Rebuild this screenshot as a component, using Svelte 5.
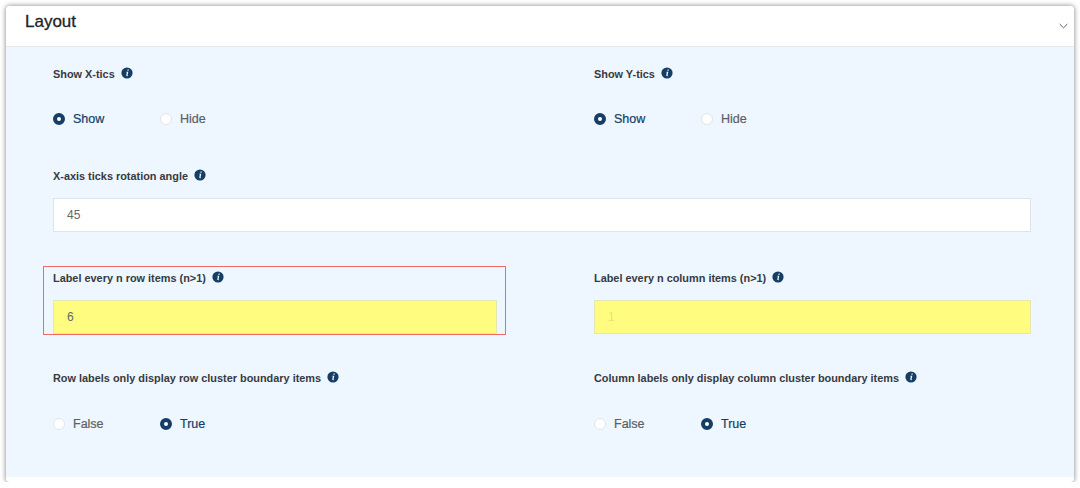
<script lang="ts">
  interface Radio {
    label: string;
    options: string[];
    selected: string;
  }

  const xTics: Radio = { label: "Show X-tics", options: ["Show", "Hide"], selected: "Show" };
  const yTics: Radio = { label: "Show Y-tics", options: ["Show", "Hide"], selected: "Show" };
  const rowBoundary: Radio = {
    label: "Row labels only display row cluster boundary items",
    options: ["False", "True"],
    selected: "True",
  };
  const colBoundary: Radio = {
    label: "Column labels only display column cluster boundary items",
    options: ["False", "True"],
    selected: "True",
  };
</script>

{#snippet info()}
  <svg class="info" viewBox="0 0 12 12">
    <circle cx="6" cy="6" r="5.6" fill="#153e64" />
    <path d="M6.6 2.5h1.2l-.25 1.2H6.35zM6.1 4.7h1.2l-.8 3.5q-.05.35.5.3l-.1.6q-1.7.3-1.6-.8l.55-2.9h-.5l.1-.6z" fill="#fff" />
  </svg>
{/snippet}

{#snippet label(text: string)}
  <div class="label">{text}{@render info()}</div>
{/snippet}

{#snippet radios(group: Radio)}
  <div class="field">
    {@render label(group.label)}
    <div class="options">
      {#each group.options as option}
        <div class="option" class:checked={option === group.selected}>
          <span class="dot"></span>
          <span>{option}</span>
        </div>
      {/each}
    </div>
  </div>
{/snippet}

<div class="card">
  <div class="header">
    <h2>Layout</h2>
    <svg class="chevron" viewBox="0 0 10 6" fill="none" stroke="#555" stroke-width="1">
      <path d="M.7.8 5 5 9.3.8" />
    </svg>
  </div>
  <div class="body">
    <div class="pair first">
      {@render radios(xTics)}
      {@render radios(yTics)}
    </div>

    <div class="wide">
      {@render label("X-axis ticks rotation angle")}
      <div class="input">45</div>
    </div>

    <div class="pair inputs">
      <div class="field">
        {@render label("Label every n row items (n>1)")}
        <div class="input yellow">6</div>
        <div class="highlight"></div>
      </div>
      <div class="field">
        {@render label("Label every n column items (n>1)")}
        <div class="input yellow disabled">1</div>
      </div>
    </div>

    <div class="pair last">
      {@render radios(rowBoundary)}
      {@render radios(colBoundary)}
    </div>
  </div>
</div>

<style>
  :global(body) {
    margin: 0;
    background: #fff;
  }

  .card {
    box-sizing: border-box;
    width: 1068px;
    height: 476px;
    margin: 6px 0 0 6px;
    padding-bottom: 5px;
    display: flex;
    flex-direction: column;
    background: #fff;
    border-radius: 4px;
    box-shadow: 0 0 4px 1px rgba(0, 0, 0, 0.36);
    font-family: "Liberation Sans", Arial, sans-serif;
  }

  .header {
    box-sizing: border-box;
    height: 41px;
    flex: none;
    padding: 0 6px 0 19px;
    display: flex;
    justify-content: space-between;
    background: #fff;
    border-bottom: 1px solid #e6eaee;
    border-radius: 4px 4px 0 0;
  }

  h2 {
    margin: 6px 0 0;
    font-size: 17px;
    line-height: 20px;
    font-weight: 400;
    color: #1f2328;
    -webkit-text-stroke: 0.3px #1f2328;
  }

  .chevron {
    width: 9px;
    height: 6px;
    margin-top: 17px;
  }

  .body {
    flex: 1;
    padding: 0 43px 0 47px;
    background: #eef6ff;
  }

  .pair {
    display: grid;
    grid-template-columns: 444px 437px;
    column-gap: 97px;
  }

  .first {
    padding-top: 20px;
  }

  .wide {
    margin-top: 43px;
  }

  .inputs {
    margin-top: 39px;
  }

  .last {
    margin-top: 37px;
  }

  .field {
    position: relative;
  }

  .label {
    display: flex;
    align-items: center;
    height: 14px;
    font-size: 10.9px;
    line-height: 14px;
    font-weight: 700;
    color: #363b42;
  }

  .info {
    width: 12px;
    height: 12px;
    margin: -2px 0 0 6px;
  }

  .options {
    display: flex;
    margin-top: 31px;
    height: 14px;
    align-items: center;
  }

  .last .options {
    margin-top: 32px;
  }

  .option {
    width: 107px;
    display: flex;
    align-items: center;
    gap: 8px;
    font-size: 12.5px;
    line-height: 14px;
    color: #5c6066;
    -webkit-text-stroke: 0.2px currentColor;
  }

  .option.checked {
    color: #153e64;
  }

  .dot {
    box-sizing: border-box;
    width: 12px;
    height: 12px;
    border-radius: 50%;
    background: #fff;
    border: 1px solid #e2e6ea;
  }

  .checked .dot {
    border: 4px solid #153e64;
  }

  .input {
    box-sizing: border-box;
    height: 34px;
    margin-top: 15px;
    padding-left: 13px;
    display: flex;
    align-items: center;
    background: #fff;
    border: 1px solid #dfe4e8;
    font-size: 12px;
    color: #63676c;
  }

  .yellow {
    background: #fffc80;
    border-color: #e4e6b4;
  }

  .disabled {
    color: #e6e678;
  }

  /* annotation drawn on top of the screenshot */
  .highlight {
    position: absolute;
    left: -10px;
    right: -9px;
    top: -5px;
    bottom: -1px;
    border: 1px solid #ef6a60;
    pointer-events: none;
  }
</style>
